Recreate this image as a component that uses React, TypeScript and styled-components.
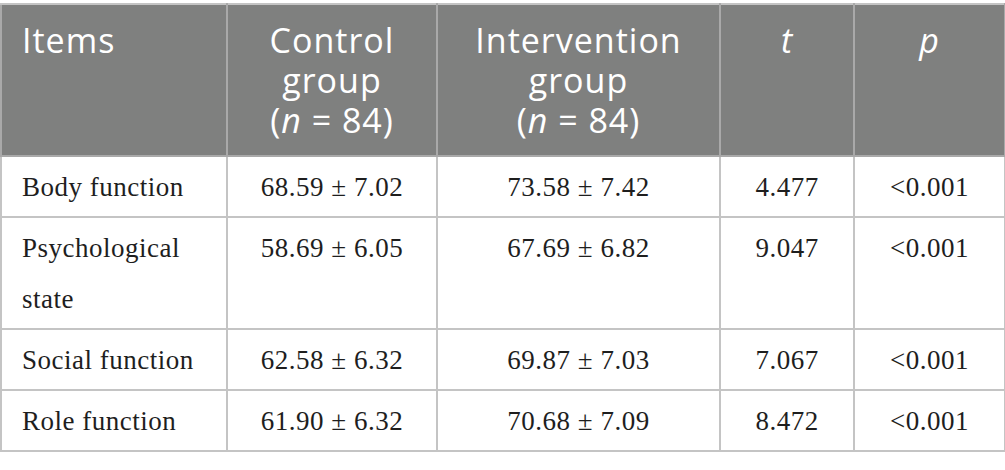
import React from "react";
import styled, { createGlobalStyle } from "styled-components";

const GlobalStyle = createGlobalStyle`
	body {
		margin: 0;
		background: #ffffff;
	}
`;

const Wrapper = styled.div`
	padding-top: 3px;
	width: 1004px;
`;

const Table = styled.table`
	width: 100%;
	border-collapse: collapse;
	table-layout: fixed;
	border: 2px solid #c4c4c4;
`;

const HeadCell = styled.th<{ $align?: string }>`
	background: #7f807f;
	color: #ffffff;
	font-family: "Open Sans", "Liberation Sans", sans-serif;
	font-weight: 400;
	font-size: 34px;
	letter-spacing: 1px;
	line-height: 40px;
	text-align: ${(p) => p.$align || "center"};
	vertical-align: top;
	padding: 15px 20px 15px;
	border: 2px solid #a9a9a9;
	border-top-color: #c4c4c4;
`;

const Cell = styled.td<{ $align?: string }>`
	font-family: "Liberation Serif", serif;
	font-size: 27px;
	letter-spacing: 0.5px;
	line-height: 51px;
	color: #1e1e1e;
	text-align: ${(p) => p.$align || "center"};
	vertical-align: top;
	padding: 5px 20px 3px;
	border: 2px solid #c4c4c4;
`;

const rows = [
	["Body function", "68.59 ± 7.02", "73.58 ± 7.42", "4.477", "<0.001"],
	["Psychological state", "58.69 ± 6.05", "67.69 ± 6.82", "9.047", "<0.001"],
	["Social function", "62.58 ± 6.32", "69.87 ± 7.03", "7.067", "<0.001"],
	["Role function", "61.90 ± 6.32", "70.68 ± 7.09", "8.472", "<0.001"],
];

export default function App() {
	return (
		<Wrapper>
			<GlobalStyle />
			<Table>
				<colgroup>
					<col style={{ width: "226px" }} />
					<col style={{ width: "210px" }} />
					<col style={{ width: "283px" }} />
					<col style={{ width: "134px" }} />
					<col style={{ width: "151px" }} />
				</colgroup>
				<thead>
					<tr>
						<HeadCell $align="left">Items</HeadCell>
						<HeadCell>
							Control
							<br />
							group
							<br />(<i>n</i> = 84)
						</HeadCell>
						<HeadCell>
							Intervention
							<br />
							group
							<br />(<i>n</i> = 84)
						</HeadCell>
						<HeadCell>
							<i>t</i>
						</HeadCell>
						<HeadCell>
							<i>p</i>
						</HeadCell>
					</tr>
				</thead>
				<tbody>
					{rows.map((r) => (
						<tr key={r[0]}>
							<Cell $align="left">{r[0]}</Cell>
							<Cell>{r[1]}</Cell>
							<Cell>{r[2]}</Cell>
							<Cell>{r[3]}</Cell>
							<Cell>{r[4]}</Cell>
						</tr>
					))}
				</tbody>
			</Table>
		</Wrapper>
	);
}
